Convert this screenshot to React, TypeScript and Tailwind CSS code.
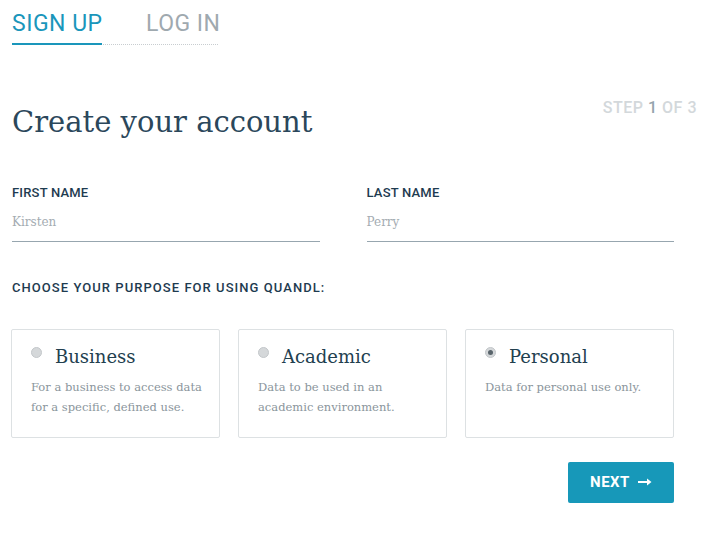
const purposes = [
  { name: 'Business', desc: 'For a business to access data for a specific, defined use.', checked: false },
  { name: 'Academic', desc: 'Data to be used in an academic environment.', checked: false },
  { name: 'Personal', desc: 'Data for personal use only.', checked: true },
];

const sans = 'font-["Roboto","Liberation_Sans",sans-serif]';
const serif = 'font-["DejaVu_Serif","Liberation_Serif",serif]';

function Field({ label, value }: { label: string; value: string }) {
  return (
    <div className="flex flex-col">
      <label className={`${sans} text-[13px] font-medium text-[#1e3b50] tracking-[0.2px] leading-4`}>{label}</label>
      <div className={`${serif} text-[12px] text-[#a4acb2] mt-[13px] pb-[11px] border-b border-[#97a6af] leading-4`}>
        {value}
      </div>
    </div>
  );
}

function Radio({ checked }: { checked: boolean }) {
  return (
    <span className="w-[11px] h-[11px] rounded-full bg-[#d5d8da] border border-[#c3c7ca] flex items-center justify-center mt-[2px] shrink-0">
      {checked && <span className="w-[5px] h-[5px] rounded-full bg-[#59646b]" />}
    </span>
  );
}

export default function App() {
  return (
    <div className="w-[723px] h-[538px] bg-white px-[12px] pt-[10px] relative">
      <div className="flex w-[206px] border-b border-dotted border-[#c8cdd0] whitespace-nowrap">
        <div className={`${sans} text-[23px] text-[#1a96bb] tracking-[0.5px] border-b-2 border-[#1a96bb] -mb-px pb-[5px] w-[90px] leading-7`}>
          SIGN UP
        </div>
        <div className={`${sans} text-[23px] text-[#9fa9af] tracking-[0.5px] ml-[44px] pb-[5px] leading-7`}>
          LOG IN
        </div>
      </div>

      <div className="flex justify-between items-start mt-[57px] w-[685px]">
        <h1 className={`${serif} text-[29px] text-[#2b475b] leading-10`}>Create your account</h1>
        <div className={`${sans} text-[16px] font-medium text-[#d3d8db] tracking-[0.5px] mt-[-6px]`}>
          STEP <span className="text-[#95a4ad]">1</span> OF 3
        </div>
      </div>

      <div className="grid grid-cols-2 gap-[47px] w-[662px] mt-[43px]">
        <Field label="FIRST NAME" value="Kirsten" />
        <Field label="LAST NAME" value="Perry" />
      </div>

      <div className={`${sans} text-[13px] font-medium text-[#1e3b50] tracking-[1.05px] mt-[36px]`}>
        CHOOSE YOUR PURPOSE FOR USING QUANDL:
      </div>

      <div className="flex gap-[18px] mt-[31px] -ml-px">
        {purposes.map((p) => (
          <div key={p.name} className="w-[209px] h-[109px] border border-[#dde1e3] rounded-[2px] pl-[19px] pr-[16px] pt-[15px]">
            <div className="flex gap-[13px] items-start">
              <Radio checked={p.checked} />
              <div className={`${serif} text-[18px] text-[#22404f] leading-6`}>{p.name}</div>
            </div>
            <p className={`${serif} text-[11.5px] text-[#8a959c] leading-5 mt-[8px]`}>{p.desc}</p>
          </div>
        ))}
      </div>

      <div className="flex justify-end w-[662px] mt-[24px]">
        <button className={`${sans} w-[106px] h-[41px] bg-[#1798b9] text-white text-[15px] font-bold tracking-[0.5px] flex items-center justify-center gap-[8px] rounded-[2px]`}>
          NEXT
          <svg width="14" height="8" viewBox="0 0 14 8">
            <path d="M0 4h11" stroke="white" strokeWidth="2" />
            <path d="M9 0.5 13.5 4 9 7.5z" fill="white" />
          </svg>
        </button>
      </div>
    </div>
  );
}
